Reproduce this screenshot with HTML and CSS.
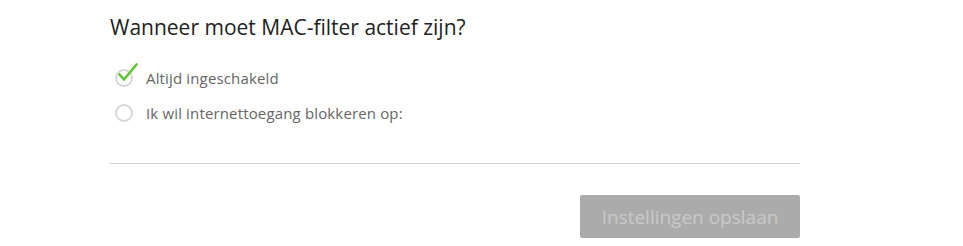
FILE: index.html
```html
<!DOCTYPE html>
<html>
<head>
<meta charset="utf-8">
<link rel="stylesheet" href="styles.css">
</head>
<body>
<div class="panel">
  <h2 class="title">Wanneer moet MAC-filter actief zijn?</h2>
  <div class="options">
    <label class="option">
      <span class="radio checked">
        <svg class="tick" width="22" height="20" viewBox="0 0 22 20"><path d="M2.5 12.5 L7 17.5 L19.5 2.5" fill="none" stroke="#5cc72a" stroke-width="2.6" stroke-linecap="round" stroke-linejoin="round"/></svg>
      </span>
      <span class="text">Altijd ingeschakeld</span>
    </label>
    <label class="option">
      <span class="radio"></span>
      <span class="text">Ik wil internettoegang blokkeren op:</span>
    </label>
  </div>
  <div class="divider"></div>
  <div class="actions">
    <button class="save" disabled>Instellingen opslaan</button>
  </div>
</div>
</body>
</html>
```
FILE: styles.css
```css
html, body {
  margin: 0;
  padding: 0;
  background: #fff;
}
body {
  font-family: "Open Sans", "Liberation Sans", sans-serif;
  color: #333;
}
.panel {
  width: 690px;
  margin-left: 110px;
  padding-top: 12px;
}
.title {
  margin: 0;
  font-size: 21px;
  font-weight: 400;
  line-height: 30px;
  color: #222;
  letter-spacing: 0;
}
.options {
  margin-top: 25px;
  display: flex;
  flex-direction: column;
  gap: 13px;
}
.option {
  display: flex;
  align-items: center;
  height: 22px;
}
.radio {
  position: relative;
  width: 14px;
  height: 14px;
  border: 2px solid #d6d6d6;
  border-radius: 50%;
  margin-left: 5px;
  margin-right: 13px;
  flex: none;
}
.tick {
  position: absolute;
  left: 0px;
  top: -9px;
}
.text {
  font-size: 15px;
  letter-spacing: 0.15px;
  color: #666;
}
.divider {
  margin-top: 39px;
  height: 1px;
  background: #d4d4d4;
}
.actions {
  display: flex;
  justify-content: flex-end;
  margin-top: 31px;
}
.save {
  width: 220px;
  height: 43px;
  border: none;
  border-radius: 2px;
  background: #ababab;
  color: #c9c9c9;
  font-family: "Open Sans", "Liberation Sans", sans-serif;
  font-size: 19px;
  padding: 0;
}
```
